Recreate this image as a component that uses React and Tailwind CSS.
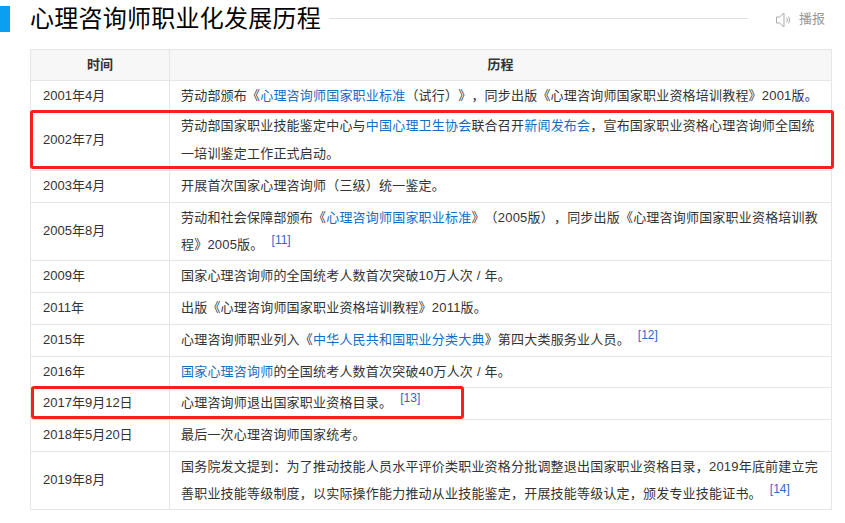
const A = ({ children }) => <a className="text-[#136ec2]">{children}</a>;
const Ref = ({ n }) => (
  <sup className="ml-[8px] align-[-1px] text-[12px] leading-none tracking-normal text-[#3366cc]">[{n}]</sup>
);

const rows = [
  ["2001年4月", "h-[31px] leading-[27px]", <>劳动部颁布《<A>心理咨询师国家职业标准</A>（试行）》，同步出版《心理咨询师国家职业资格培训教程》2001版。</>],
  ["2002年7月", "h-[59px] leading-[28px]", <>劳动部国家职业技能鉴定中心与<A>中国心理卫生协会</A>联合召开<A>新闻发布会</A>，宣布国家职业资格心理咨询师全国统一培训鉴定工作正式启动。</>],
  ["2003年4月", "h-[32px] leading-[27px]", <>开展首次国家心理咨询师（三级）统一鉴定。</>],
  ["2005年8月", "h-[58px] leading-[27px]", <>劳动和社会保障部颁布《<A>心理咨询师国家职业标准</A>》（2005版），同步出版《心理咨询师国家职业资格培训教程》2005版。<Ref n="11" /></>],
  ["2009年", "h-[32px] leading-[27px]", <>国家心理咨询师的全国统考人数首次突破10万人次 / 年。</>],
  ["2011年", "h-[32px] leading-[27px]", <>出版《心理咨询师国家职业资格培训教程》2011版。</>],
  ["2015年", "h-[32px] leading-[27px]", <>心理咨询师职业列入《<A>中华人民共和国职业分类大典</A>》第四大类服务业人员。<Ref n="12" /></>],
  ["2016年", "h-[31px] leading-[27px]", <><A>国家心理咨询师</A>的全国统考人数首次突破40万人次 / 年。</>],
  ["2017年9月12日", "h-[32px] leading-[27px]", <>心理咨询师退出国家职业资格目录。<Ref n="13" /></>],
  ["2018年5月20日", "h-[32px] leading-[27px]", <>最后一次心理咨询师国家统考。</>],
  ["2019年8月", "h-[58px] leading-[27px]", <>国务院发文提到：为了推动技能人员水平评价类职业资格分批调整退出国家职业资格目录，2019年底前建立完善职业技能等级制度，以实际操作能力推动从业技能鉴定，开展技能等级认定，颁发专业技能证书。<Ref n="14" /></>],
];

export default function App() {
  return (
    <div className="relative h-[523px] w-[845px] overflow-hidden bg-white font-['Liberation_Sans','Noto_Sans_CJK_SC',sans-serif] text-[13px] text-[#333] [text-spacing-trim:space-all]">
      <div className="flex h-[49px] items-start pt-[6px]">
        <div className="h-[26px] w-[10px] bg-[#0a9ff0]" />
        <h2 className="ml-[20px] whitespace-nowrap text-[24px] leading-[26px] font-normal tracking-[0.25px] text-[#000]">心理咨询师职业化发展历程</h2>
        <div className="mt-[12px] ml-[8px] h-px w-[419px] bg-[#e0e0e0]" />
        <div className="ml-[27px] flex items-center text-[#999]">
          <svg width="16" height="16" viewBox="0 0 16 16" fill="none" stroke="#aaa" strokeWidth="1" className="mt-px">
            <path d="M1.5 5h3l4.500-4v14l-4.500-4h-3z" />
            <path d="M11.500 5.500c1 1.500 1 3.500 0 5M13.500 4.500c1.300 2.200 1.300 4.800 0 7" />
          </svg>
          <span className="ml-[8px] leading-[26px]">播报</span>
        </div>
      </div>
      <table className="ml-[30px] w-[802px] table-fixed border-collapse border border-[#e6e6e6]">
        <colgroup>
          <col className="w-[139px]" />
          <col />
        </colgroup>
        <thead>
          <tr className="h-[31px] bg-[#f7f7f7] leading-[27px]">
            <th className="border border-[#e6e6e6] pb-[2px] text-center font-bold">时间</th>
            <th className="border border-[#e6e6e6] pb-[2px] text-center font-bold">历程</th>
          </tr>
        </thead>
        <tbody>
          {rows.map(([date, rowClass, content]) => (
            <tr key={date} className={rowClass}>
              <td className="border border-[#e6e6e6] px-3 pb-[2px]">{date}</td>
              <td className="border border-[#e6e6e6] pr-[9px] pb-[2px] pl-[11px] tracking-[0.2px]">{content}</td>
            </tr>
          ))}
        </tbody>
      </table>
      {/* red annotation boxes drawn over the table */}
      <div className="absolute top-[110px] left-[30px] h-[59px] w-[804px] rounded-[3px] border-[3px] border-[#f9201c]" />
      <div className="absolute top-[386px] left-[31px] h-[33px] w-[433px] rounded-[3px] border-[3px] border-[#f9201c]" />
    </div>
  );
}
